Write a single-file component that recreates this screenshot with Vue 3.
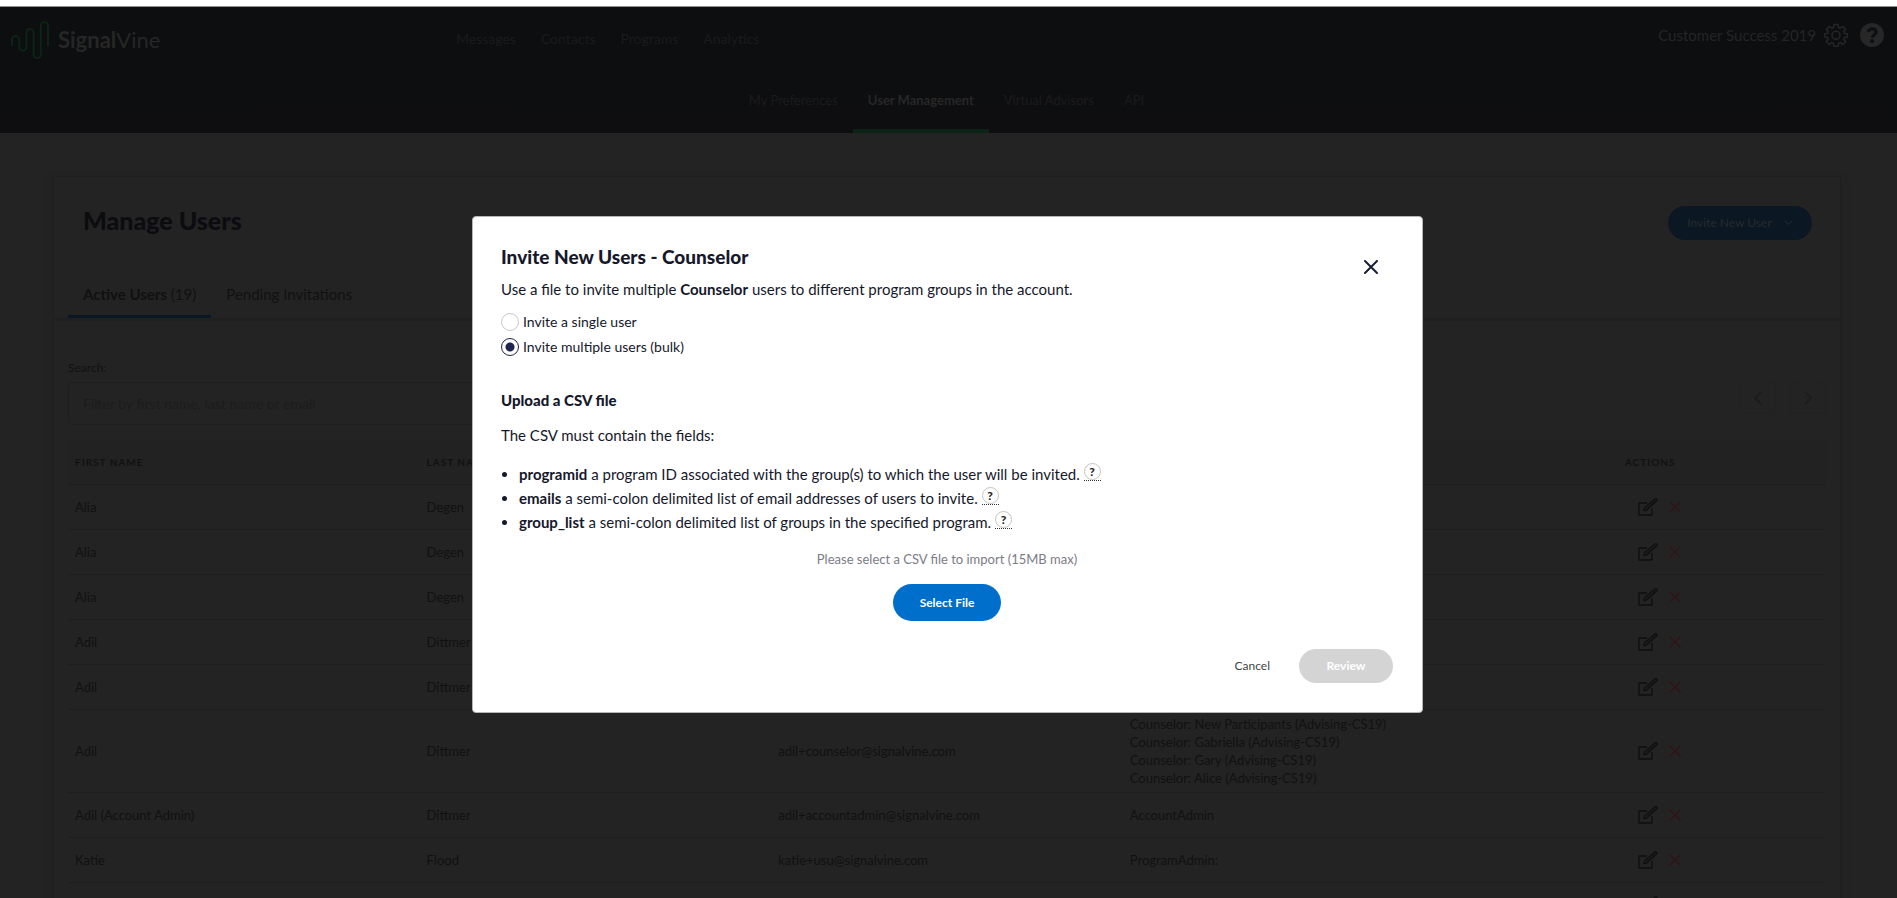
<script setup>
import { ref } from 'vue';

const mainNav = ['Messages', 'Contacts', 'Programs', 'Analytics'];
const subNav = ['My Preferences', 'User Management', 'Virtual Advisors', 'API'];
const activeSub = ref('User Management');
const search = ref('');

const users = ref([
    { id: 1, first: 'Alia', last: 'Degen', email: '', roles: [] },
    { id: 2, first: 'Alia', last: 'Degen', email: '', roles: [] },
    { id: 3, first: 'Alia', last: 'Degen', email: '', roles: [] },
    { id: 4, first: 'Adil', last: 'Dittmer', email: '', roles: [] },
    { id: 5, first: 'Adil', last: 'Dittmer', email: '', roles: [] },
    {
        id: 6,
        first: 'Adil',
        last: 'Dittmer',
        email: 'adil+counselor@signalvine.com',
        roles: [
            'Counselor: New Participants (Advising-CS19)',
            'Counselor: Gabriella (Advising-CS19)',
            'Counselor: Gary (Advising-CS19)',
            'Counselor: Alice (Advising-CS19)',
        ],
    },
    { id: 7, first: 'Adil (Account Admin)', last: 'Dittmer', email: 'adil+accountadmin@signalvine.com', roles: ['AccountAdmin'] },
    { id: 8, first: 'Katie', last: 'Flood', email: 'katie+usu@signalvine.com', roles: ['ProgramAdmin:'] },
    { id: 9, first: '', last: '', email: '', roles: [] },
]);

// invite dialog
const showModal = ref(true);
const inviteMode = ref('bulk');
const fields = [
    { name: 'programid', text: 'a program ID associated with the group(s) to which the user will be invited.' },
    { name: 'emails', text: 'a semi-colon delimited list of email addresses of users to invite.' },
    { name: 'group_list', text: 'a semi-colon delimited list of groups in the specified program.' },
];
</script>

<template>
    <div class="page">
        <header class="header">
            <div class="topbar">
                <a href="#" class="logo">
                    <svg width="38" height="38" viewBox="0 0 38 38" fill="none" stroke="#0c2415" stroke-width="2">
                        <path d="M1 25V18.6a3.6 3.6 0 0 1 7.2 0v7.4a3.6 3.6 0 0 0 7.2 0V11.6a3.6 3.6 0 0 1 7.2 0v21.8a3.6 3.6 0 0 0 7.2 0V4.6a3.6 3.6 0 0 1 7.2 0V25" />
                    </svg>
                    <span><b>Signal</b>Vine</span>
                </a>
                <nav class="main-nav">
                    <a v-for="item in mainNav" :key="item" href="#">{{ item }}</a>
                </nav>
                <div class="account">
                    <span>Customer Success 2019</span>
                    <button type="button" class="icon-btn" aria-label="Settings">
                        <svg width="24" height="24" viewBox="0 0 24 24" fill="none" stroke="#252525" stroke-width="1.6" stroke-linejoin="round">
                            <path d="M10 1.5h4l.6 3 1.7.7 2.6-1.8 2.7 2.7-1.8 2.6.7 1.7 3 .6v2.9l-3 .6-.7 1.7 1.8 2.6-2.7 2.7-2.6-1.8-1.7.7-.6 2.9h-4l-.6-2.9-1.7-.7-2.6 1.8-2.7-2.7 1.8-2.6-.7-1.7-3-.6V11l3-.6.7-1.7-1.8-2.6 2.7-2.7 2.6 1.8 1.7-.7z" />
                            <circle cx="12" cy="12.3" r="4" />
                        </svg>
                    </button>
                    <button type="button" class="icon-btn" aria-label="Help">
                        <svg width="24" height="24" viewBox="0 0 24 24">
                            <circle cx="12" cy="12" r="12" fill="#272727" />
                            <path d="M8 8.6c1-2 2.4-2.8 4.2-2.8 2.2 0 3.9 1.3 3.9 3.2 0 2.9-3.9 2.9-3.9 5.6" fill="none" stroke="#0d0f10" stroke-width="3" />
                            <circle cx="12.1" cy="18" r="2" fill="#0d0f10" />
                        </svg>
                    </button>
                </div>
            </div>
            <nav class="sub-nav">
                <a v-for="item in subNav" :key="item" href="#" :class="{ active: item === activeSub }" @click.prevent="activeSub = item">{{ item }}</a>
            </nav>
        </header>

        <main class="card">
            <div class="card-head">
                <h1>Manage Users</h1>
                <button type="button" class="invite-btn" @click="showModal = true">
                    Invite New User
                    <svg width="9" height="6" viewBox="0 0 9 6" fill="none" stroke="currentColor"><path d="M.5.5l4 4 4-4" /></svg>
                </button>
            </div>
            <div class="tabs">
                <a href="#" class="active"><b>Active Users</b> (19)</a>
                <a href="#">Pending Invitations</a>
            </div>

            <div class="card-body">
                <label for="search">Search:</label>
                <div class="filter">
                    <input id="search" v-model="search" type="text" placeholder="Filter by first name, last name or email" />
                    <div class="pager">
                        <button type="button" aria-label="Previous page">
                            <svg width="8" height="14" viewBox="0 0 8 14" fill="none" stroke="#1b1b1b" stroke-width="1.5"><path d="M7 1L1 7l6 6" /></svg>
                        </button>
                        <button type="button" aria-label="Next page">
                            <svg width="8" height="14" viewBox="0 0 8 14" fill="none" stroke="#1b1b1b" stroke-width="1.5"><path d="M1 1l6 6-6 6" /></svg>
                        </button>
                    </div>
                </div>

                <table>
                    <thead>
                        <tr>
                            <th>First Name</th>
                            <th>Last Name</th>
                            <th aria-label="Email"></th>
                            <th aria-label="Roles"></th>
                            <th class="actions-head">Actions</th>
                        </tr>
                    </thead>
                    <tbody>
                        <tr v-for="user in users" :key="user.id">
                            <td>{{ user.first }}</td>
                            <td>{{ user.last }}</td>
                            <td>{{ user.email }}</td>
                            <td>
                                <div v-for="role in user.roles" :key="role">{{ role }}</div>
                            </td>
                            <td>
                                <div class="actions">
                                    <button type="button" class="icon-btn" aria-label="Edit user">
                                        <svg width="20" height="18" viewBox="0 0 20 18" fill="none" stroke="#0f0f0f" stroke-width="1.3" stroke-linejoin="round">
                                            <path d="M9 5H1v12h13v-7" />
                                            <path d="M6 12.5l.6-2.7L17 1c1.3-.8 2.7.6 1.8 1.8L8.7 12z" />
                                            <path d="M8.5 10.5l9-8" stroke-width="0.8" />
                                        </svg>
                                    </button>
                                    <button type="button" class="icon-btn" aria-label="Remove user">
                                        <svg width="12" height="12" viewBox="0 0 12 12" stroke="#321315" stroke-width="1.3"><path d="M0 0l12 12M12 0L0 12" /></svg>
                                    </button>
                                </div>
                            </td>
                        </tr>
                    </tbody>
                </table>
            </div>
        </main>

        <!-- invite dialog, above the dimmed page -->
        <div v-if="showModal" class="overlay">
            <section class="modal" role="dialog" aria-labelledby="modal-title">
                <div class="modal-head">
                    <div>
                        <h2 id="modal-title">Invite New Users - Counselor</h2>
                        <p>Use a file to invite multiple <b>Counselor</b> users to different program groups in the account.</p>
                    </div>
                    <button type="button" class="close" aria-label="Close" @click="showModal = false">
                        <svg width="14" height="14" viewBox="0 0 14 14" stroke="#1a1d36" stroke-width="2" stroke-linecap="round"><path d="M1 1l12 12M13 1L1 13" /></svg>
                    </button>
                </div>

                <div class="modes">
                    <label><input v-model="inviteMode" type="radio" name="mode" value="single" />Invite a single user</label>
                    <label><input v-model="inviteMode" type="radio" name="mode" value="bulk" />Invite multiple users (bulk)</label>
                </div>

                <h3>Upload a CSV file</h3>
                <p>The CSV must contain the fields:</p>
                <ul>
                    <li v-for="field in fields" :key="field.name">
                        <b>{{ field.name }}</b> {{ field.text }}
                        <abbr tabindex="0"><span>?</span></abbr>
                    </li>
                </ul>

                <div class="upload">
                    <p>Please select a CSV file to import (15MB max)</p>
                    <button type="button">Select File</button>
                </div>

                <footer>
                    <button type="button" class="cancel" @click="showModal = false">Cancel</button>
                    <button type="button" class="review" disabled>Review</button>
                </footer>
            </section>
        </div>
    </div>
</template>

<style>
body {
    margin: 0;
    overflow: hidden;
    background: #232323;
}
</style>

<style scoped>
* {
    box-sizing: border-box;
}

.page {
    height: 100vh;
    overflow: hidden;
    border-top: 6px solid #fff;
    background: #232323;
    color: #111112;
    font-family: Lato, "Noto Sans", sans-serif;
    font-size: 14px;
    line-height: 18px;
}

a {
    color: inherit;
    text-decoration: none;
}

button,
input {
    margin: 0;
    font: inherit;
    color: inherit;
}

button {
    padding: 0;
    border: 0;
    background: none;
}

h1,
h2,
h3,
p,
ul {
    margin: 0;
}

svg {
    display: block;
}

/* 顶部导航 */
.header {
    height: 127px;
    border-top: 1px solid #8c8e8f;
    background: linear-gradient(#0c0e0f, #0e0e10);
    color: #1b1b1c;
}

.topbar {
    display: flex;
    align-items: flex-start;
    height: 67px;
    padding: 14px 13px 0 11px;
}

.logo {
    display: flex;
    align-items: center;
    gap: 9px;
    width: 445px;
    color: #262626;
    font-size: 22px;
}

.main-nav {
    display: flex;
    gap: 25px;
    margin-top: 9px;
}

.account {
    display: flex;
    align-items: center;
    gap: 8px;
    margin-left: auto;
    margin-top: 2px;
    color: #252525;
    font-size: 15px;
}

.account .icon-btn + .icon-btn {
    margin-left: 4px;
}

.sub-nav {
    display: flex;
    justify-content: center;
    height: 59px;
    padding-right: 4px;
    font-size: 13px;
}

.sub-nav a {
    padding: 17px 15px 0;
    border-bottom: 4px solid transparent;
}

.sub-nav .active {
    border-color: #0c2415;
    color: #272727;
    font-weight: bold;
}

/* 用户列表 */
.card {
    margin: 43px 56px 0 53px;
    border: 1px solid #1f1f1f;
    box-shadow: 0 4px 6px #202020;
}

.card-head {
    display: flex;
    justify-content: space-between;
    align-items: flex-start;
    padding: 29px 28px 0 29px;
}

h1 {
    padding-top: 2px;
    color: #0c0c10;
    font-size: 25px;
    line-height: 24px;
    font-weight: 900;
}

.invite-btn {
    display: flex;
    align-items: center;
    justify-content: center;
    gap: 12px;
    width: 144px;
    height: 34px;
    border-radius: 17px;
    background: #0b1722;
    color: #282a2c;
    font-size: 12px;
}

.tabs {
    display: flex;
    padding: 37px 14px 0;
    border-bottom: 3px solid #202020;
    font-size: 15px;
}

.tabs a {
    padding: 8px 15px 12px;
    border-bottom: 3px solid transparent;
}

.tabs .active {
    border-color: #0b1722;
}

.card-body {
    padding: 38px 14px 0;
}

.card-body label {
    display: block;
    font-size: 12px;
}

.filter {
    display: flex;
    justify-content: space-between;
    margin-top: 5px;
}

.filter input {
    width: 408px;
    height: 43px;
    padding: 0 14px;
    border: 1px solid #1e1e1e;
    border-radius: 4px;
    background: transparent;
    outline: 0;
}

.filter input::placeholder {
    color: #1c1c1c;
    opacity: 1;
}

.pager {
    display: flex;
    gap: 14px;
}

.pager button {
    display: flex;
    align-items: center;
    justify-content: center;
    width: 36px;
    height: 32px;
    border: 1px solid #212121;
    border-radius: 4px;
}

table {
    width: 100%;
    margin-top: 15px;
    border-collapse: collapse;
    table-layout: fixed;
    font-size: 13px;
}

th {
    height: 44px;
    padding: 0 7px;
    background: #222;
    font-size: 10px;
    letter-spacing: 1px;
    text-align: left;
    text-transform: uppercase;
}

tr {
    border-bottom: 1px solid #1e1e1e;
}

td {
    height: 45px;
    padding: 5px 7px;
}

.actions-head {
    text-align: center;
}

.actions {
    display: flex;
    justify-content: center;
    align-items: center;
    gap: 11px;
    padding-left: 19px;
}

/* 弹窗 */
.overlay {
    position: absolute;
    inset: 0;
    display: flex;
    justify-content: center;
    align-items: flex-start;
    padding: 216px 2px 0 0;
}

.modal {
    width: 951px;
    padding: 28px 29px 29px 28px;
    border: 1px solid #b5b5b5;
    border-radius: 4px;
    background: #fff;
    color: #15182b;
    font-size: 15px;
    line-height: 24px;
}

.modal-head {
    display: flex;
    justify-content: space-between;
    align-items: flex-start;
}

h2 {
    font-size: 19px;
    line-height: 24px;
    font-weight: 900;
}

.modal-head p {
    margin-top: 8px;
}

.close {
    padding: 15px;
}

.modes {
    display: flex;
    flex-direction: column;
    gap: 1px;
    margin-top: 9px;
    font-size: 14px;
}

.modes label {
    display: flex;
    align-items: center;
    gap: 4px;
}

.modes input {
    width: 18px;
    height: 18px;
    border: 1px solid #c9c9cc;
    border-radius: 50%;
    appearance: none;
}

.modes input:checked {
    border-color: #1e2450;
    background: radial-gradient(circle, #1e2450 4px, #fff 5px);
}

h3 {
    margin: 29px 0 11px;
    font-size: 15px;
    line-height: 24px;
    font-weight: 900;
}

ul {
    margin-top: 15px;
    padding-left: 18px;
}

abbr {
    display: inline-block;
    height: 18px;
    border-bottom: 1px dotted #333;
    line-height: 16px;
    vertical-align: 4px;
}

abbr span {
    display: block;
    width: 17px;
    height: 17px;
    border: 1px solid #c4c4c4;
    border-radius: 50%;
    color: #222;
    font-size: 12px;
    font-weight: 900;
    text-align: center;
}

.upload {
    margin-top: 13px;
    text-align: center;
}

.upload p {
    color: #7b7c86;
    font-size: 13px;
}

.upload button {
    width: 108px;
    height: 37px;
    margin-top: 13px;
    border-radius: 19px;
    background: #006fcb;
    color: #fff;
    font-size: 12px;
    font-weight: bold;
}

footer {
    display: flex;
    justify-content: flex-end;
    gap: 29px;
    margin-top: 28px;
    font-size: 12px;
}

.cancel {
    color: #444;
}

.review {
    width: 94px;
    height: 34px;
    border-radius: 17px;
    background: #d4d4d4;
    color: #fff;
    font-weight: bold;
}
</style>
